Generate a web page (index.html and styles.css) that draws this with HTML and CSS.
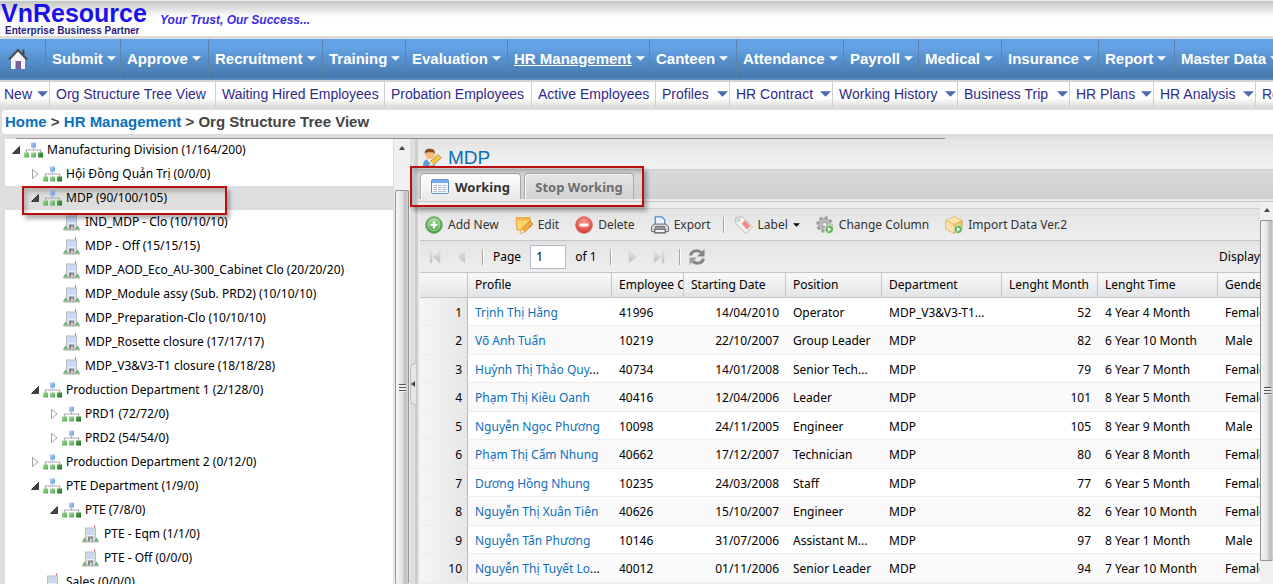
FILE: index.html
```html
<!DOCTYPE html>
<html lang="en">
<head>
<meta charset="utf-8">
<title>VnResource - Org Structure Tree View</title>
<link rel="stylesheet" href="styles.css">
</head>
<body>
<svg class="defs" aria-hidden="true">
  <defs>
    <linearGradient id="gBlue" x1="0" y1="0" x2="1" y2="1"><stop offset="0" stop-color="#b4d2fa"/><stop offset="1" stop-color="#6a9ae4"/></linearGradient>
    <linearGradient id="gLight" x1="0" y1="0" x2="1" y2="1"><stop offset="0" stop-color="#a4dca0"/><stop offset="1" stop-color="#55a550"/></linearGradient>
    <linearGradient id="gDark" x1="0" y1="0" x2="1" y2="1"><stop offset="0" stop-color="#5cae58"/><stop offset="1" stop-color="#1c6e1c"/></linearGradient>
    <linearGradient id="gGrey" x1="0" y1="0" x2="0" y2="1"><stop offset="0" stop-color="#e8e8e8"/><stop offset="1" stop-color="#9a9a9a"/></linearGradient>
    <radialGradient id="gAdd" cx=".5" cy=".3" r=".7"><stop offset="0" stop-color="#a5dc96"/><stop offset="1" stop-color="#3f9638"/></radialGradient>
    <radialGradient id="gDel" cx=".5" cy=".3" r=".7"><stop offset="0" stop-color="#f79a90"/><stop offset="1" stop-color="#d93a30"/></radialGradient>
  </defs>
  <symbol id="org" viewBox="0 0 19 17">
    <path d="M9.500 6v3M2.500 11.500V8.500h14v3" fill="none" stroke="#a9a9b0" stroke-width="1.200"/>
    <rect x="7" y="1" width="5" height="5" fill="url(#gBlue)"/>
    <rect x="0" y="11" width="5" height="5" fill="url(#gLight)"/>
    <rect x="7" y="11" width="5" height="5" fill="url(#gLight)"/>
    <rect x="14" y="11" width="5" height="5" fill="url(#gDark)"/>
  </symbol>
  <symbol id="bld" viewBox="0 0 19 17">
    <path d="M13.500 0v2" stroke="#d33"/>
    <path d="M4 2h11v14H4z" fill="#b9bbbf"/>
    <path d="M5 3h9v12H5z" fill="#dcdde0"/>
    <path d="M6 4h7v7H6z" fill="#eaf2ff"/>
    <path d="M6 4.500h7M6 6.500h7M6 8.500h7" stroke="#a3c0f2"/>
    <path d="M7 11h5v5H7z" fill="#85878b"/><path d="M9 13h2v3H9z" fill="#d4d5d8"/>
    <path d="M1 16l2.500-4 2.500 4zM13 16l2.500-4 2.500 4z" fill="#69b069"/>
    <path d="M1 16.500h17" stroke="#a5b0a5"/>
  </symbol>
  <symbol id="open" viewBox="0 0 8 8"><path d="M7.500 .5v7h-7z" fill="#454545" stroke="#222" stroke-width=".8"/></symbol>
  <symbol id="shut" viewBox="0 0 8 10"><path d="M1.500 .5v9l5.500-4.500z" fill="#fff" stroke="#a2a2a2"/></symbol>
  <symbol id="down" viewBox="0 0 12 6"><path d="M0 0h12L6 6z" fill="currentColor"/></symbol>
</svg>

<header class="brand">
  <div class="logo"><strong class="logo-name">VnResource</strong><span class="logo-sub">Enterprise Business Partner</span></div>
  <em class="slogan">Your Trust, Our Success...</em>
</header>

<nav class="mainnav">
  <a href="#" aria-label="Home page"><svg class="i-home" viewBox="0 0 20 21"><path d="M3 10l7-7 7 7v11H3z" fill="#f4f4f6"/><path d="M1 11.500l9-9.500 9 9.500" fill="none" stroke="#4b4d52" stroke-width="2.200"/><path d="M15.500 7V1.500" stroke="#444" stroke-width="2"/><path d="M7.500 13h5.500v8H7.500z" fill="#7c5ca0"/></svg></a>
  <a href="#">Submit<svg><use href="#down"/></svg></a>
  <a href="#">Approve<svg><use href="#down"/></svg></a>
  <a href="#">Recruitment<svg><use href="#down"/></svg></a>
  <a href="#">Training<svg><use href="#down"/></svg></a>
  <a href="#">Evaluation<svg><use href="#down"/></svg></a>
  <a href="#"><u>HR Management</u><svg><use href="#down"/></svg></a>
  <a href="#">Canteen<svg><use href="#down"/></svg></a>
  <a href="#">Attendance<svg><use href="#down"/></svg></a>
  <a href="#">Payroll<svg><use href="#down"/></svg></a>
  <a href="#">Medical<svg><use href="#down"/></svg></a>
  <a href="#">Insurance<svg><use href="#down"/></svg></a>
  <a href="#">Report<svg><use href="#down"/></svg></a>
  <a href="#">Master Data<svg><use href="#down"/></svg></a>
</nav>

<nav class="subnav">
  <a href="#">New<svg><use href="#down"/></svg></a>
  <a href="#">Org Structure Tree View</a>
  <a href="#">Waiting Hired Employees</a>
  <a href="#">Probation Employees</a>
  <a href="#">Active Employees</a>
  <a href="#">Profiles<svg><use href="#down"/></svg></a>
  <a href="#">HR Contract<svg><use href="#down"/></svg></a>
  <a href="#">Working History<svg><use href="#down"/></svg></a>
  <a href="#">Business Trip<svg><use href="#down"/></svg></a>
  <a href="#">HR Plans<svg><use href="#down"/></svg></a>
  <a href="#">HR Analysis<svg><use href="#down"/></svg></a>
  <a href="#">Report</a>
</nav>

<div class="crumbs"><a href="#">Home</a> &gt; <a href="#">HR Management</a> &gt; <span>Org Structure Tree View</span></div>
<div class="rule"></div>

<div class="work">
  <section class="tree-pane">
    <ul class="tree">
      <li class="l0"><svg class="tw"><use href="#open"/></svg><svg class="ic"><use href="#org"/></svg>Manufacturing Division (1/164/200)</li>
      <li class="l1"><svg class="tw"><use href="#shut"/></svg><svg class="ic"><use href="#org"/></svg>Hội Đồng Quản Trị (0/0/0)</li>
      <li class="l1 sel"><svg class="tw"><use href="#open"/></svg><svg class="ic"><use href="#org"/></svg>MDP (90/100/105)<span class="mark mark-node"></span></li>
      <li class="l2"><span class="tw"></span><svg class="ic"><use href="#bld"/></svg>IND_MDP - Clo (10/10/10)</li>
      <li class="l2"><span class="tw"></span><svg class="ic"><use href="#bld"/></svg>MDP - Off (15/15/15)</li>
      <li class="l2"><span class="tw"></span><svg class="ic"><use href="#bld"/></svg>MDP_AOD_Eco_AU-300_Cabinet Clo (20/20/20)</li>
      <li class="l2"><span class="tw"></span><svg class="ic"><use href="#bld"/></svg>MDP_Module assy (Sub. PRD2) (10/10/10)</li>
      <li class="l2"><span class="tw"></span><svg class="ic"><use href="#bld"/></svg>MDP_Preparation-Clo (10/10/10)</li>
      <li class="l2"><span class="tw"></span><svg class="ic"><use href="#bld"/></svg>MDP_Rosette closure (17/17/17)</li>
      <li class="l2"><span class="tw"></span><svg class="ic"><use href="#bld"/></svg>MDP_V3&amp;V3-T1 closure (18/18/28)</li>
      <li class="l1"><svg class="tw"><use href="#open"/></svg><svg class="ic"><use href="#org"/></svg>Production Department 1 (2/128/0)</li>
      <li class="l2"><svg class="tw"><use href="#shut"/></svg><svg class="ic"><use href="#org"/></svg>PRD1 (72/72/0)</li>
      <li class="l2"><svg class="tw"><use href="#shut"/></svg><svg class="ic"><use href="#org"/></svg>PRD2 (54/54/0)</li>
      <li class="l1"><svg class="tw"><use href="#shut"/></svg><svg class="ic"><use href="#org"/></svg>Production Department 2 (0/12/0)</li>
      <li class="l1"><svg class="tw"><use href="#open"/></svg><svg class="ic"><use href="#org"/></svg>PTE Department (1/9/0)</li>
      <li class="l2"><svg class="tw"><use href="#open"/></svg><svg class="ic"><use href="#org"/></svg>PTE (7/8/0)</li>
      <li class="l3"><span class="tw"></span><svg class="ic"><use href="#bld"/></svg>PTE - Eqm (1/1/0)</li>
      <li class="l3"><span class="tw"></span><svg class="ic"><use href="#bld"/></svg>PTE - Off (0/0/0)</li>
      <li class="l1"><span class="tw"></span><svg class="ic"><use href="#bld"/></svg>Sales (0/0/0)</li>
    </ul>
    <div class="vbar vbar-tree"><svg class="up" viewBox="0 0 6 4"><path d="M3 0l3 4H0z" fill="#444"/></svg><div class="thumb"><i class="grip"></i></div></div>
  </section>

  <div class="splitter"><button type="button" aria-label="Collapse tree"><svg viewBox="0 0 4 6"><path d="M4 0v6L0 3z" fill="#444"/></svg></button></div>

  <section class="detail">
    <h1 class="title"><svg viewBox="0 0 20 20"><path d="M1 18c0-5 2-7 6-7s6 2 6 7z" fill="#5b9de0"/><path d="M5 11l2.500 4L10 11z" fill="#fff"/><circle cx="8" cy="6.500" r="4.800" fill="#f7bd85"/><path d="M3 6C2 2 5 .5 8.500 .8 12 1 13.500 3 12.500 6.500 12 4.500 11 4 9 4.300 6.500 4.500 4 4 3 6z" fill="#8d4d1c"/><path d="M7 18l1.500-4.500 7.500-7 3.300 3.300-7.500 6.700z" fill="#f6c548" stroke="#b5842a" stroke-width=".8"/><path d="M7 18l1.500-4.500L11.800 17z" fill="#fae4b8"/></svg>MDP</h1>
    <div class="tabs">
      <button type="button" class="tab on"><svg viewBox="0 0 18 15"><rect x=".5" y=".5" width="17" height="14" rx="1" fill="#f4f8ff" stroke="#5c8fd6"/><path d="M1 1h16v3H1z" fill="#7aa7e6"/><path d="M2.500 6.500h13M2.500 8.500h13M2.500 10.500h13M2.500 12.500h13" stroke="#b4bccb" stroke-dasharray="3.500 1"/></svg>Working</button>
      <button type="button" class="tab">Stop Working</button>
      <span class="mark mark-tabs"></span>
    </div>
    <div class="tabline"></div>
    <div class="body">
      <div class="grid">
        <div class="tools">
          <button type="button"><svg viewBox="0 0 18 18"><circle cx="9" cy="9" r="8.300" fill="url(#gAdd)" stroke="#599c50" stroke-width=".8"/><circle cx="9" cy="9" r="5.800" fill="none" stroke="#fff" opacity=".5"/><path d="M9 5.500v7M5.500 9h7" stroke="#fff" stroke-width="2.200"/></svg>Add New</button>
          <button type="button"><svg viewBox="0 0 18 18"><path d="M1 1.500h14l1 9-6 3.500H2z" fill="#f9d468" stroke="#dca43c"/><path d="M1 1.500h14v3H1z" fill="#f3b548"/><path d="M5 17.500l1.500-4.500 8.500-8 3 3-8.500 8z" fill="#f8a93a" stroke="#b97a26" stroke-width=".8"/><path d="M5 17.500L6.500 13l3 3z" fill="#fbe6c2"/></svg>Edit</button>
          <button type="button"><svg viewBox="0 0 18 18"><circle cx="9" cy="9" r="8.300" fill="url(#gDel)" stroke="#c9564e" stroke-width=".8"/><path d="M4.500 7.500h9v3h-9z" fill="#fff"/></svg>Delete</button>
          <button type="button"><svg viewBox="0 0 19 19"><path d="M4.500 9V1h7L14.500 4v5" fill="#eaf3ff" stroke="#4f88d0" stroke-width="1.300"/><path d="M3 8.500h13l2.500 3v5h-18v-5z" fill="#d7d8dc" stroke="#66686e"/><path d="M4 11.500h11M4 17.800v-4h11v4z" fill="#f4f4f4" stroke="#55575c" stroke-width="1.200"/></svg>Export</button>
          <i class="sep"></i>
          <button type="button"><svg viewBox="0 0 18 18"><path d="M.8 1.500L7 .8l10.500 10L11 17.500.8 7.500z" fill="#f6f3f3" stroke="#b9b4b4"/><path d="M6.500 7.500L10 4.500l5.500 5.700-3.500 3.500z" fill="#f28c8c"/><circle cx="3.800" cy="4" r="1.300" fill="#fff" stroke="#999" stroke-width=".7"/></svg>Label<svg class="caret"><use href="#down"/></svg></button>
          <button type="button"><svg viewBox="0 0 19 19"><circle cx="9" cy="9" r="7.300" fill="none" stroke="#a0a0a0" stroke-width="3" stroke-dasharray="3.200 2.530"/><circle cx="9" cy="9" r="6.300" fill="#bdbdbd" stroke="#8f8f8f" stroke-width=".8"/><circle cx="9" cy="9" r="2.500" fill="#eee" stroke="#8a8a8a"/><circle cx="14" cy="14" r="4.500" fill="#62b258" stroke="#e6f5e4"/><path d="M12.500 11.500v5l4-2.500z" fill="#fff"/></svg>Change Column</button>
          <button type="button"><svg viewBox="0 0 19 19"><path d="M9.500 .8l8.500 4v9l-8.500 4.500L1 13.800v-9z" fill="#f2c35a" stroke="#d29c35"/><path d="M1 4.800l8.500-4 8.500 4-8.500 4.200z" fill="#fbe6a9"/><path d="M9.500 9v9.300L1 13.800v-9z" fill="#fae2ad"/><path d="M1 4.800L9.500 9 18 4.800M9.500 9v9" fill="none" stroke="#dcab4c" stroke-width=".8"/><circle cx="14" cy="14" r="4.500" fill="#62b258" stroke="#e6f5e4"/><path d="M12.500 11.500v5l4-2.500z" fill="#fff"/></svg>Import Data Ver.2</button>
        </div>
        <div class="pager">
          <button type="button" aria-label="First page"><svg viewBox="0 0 14 14"><path d="M2 1h2v12H2zM12 1v12L5 7z" fill="url(#gGrey)" stroke="#c6c6c6" stroke-width=".6"/></svg></button>
          <button type="button" aria-label="Previous page"><svg viewBox="0 0 14 14"><path d="M10 1v12L3 7z" fill="url(#gGrey)" stroke="#c6c6c6" stroke-width=".6"/></svg></button>
          <i class="sep"></i>
          <label for="page">Page</label><input id="page" type="text" value="1"><span class="of">of 1</span>
          <i class="sep"></i>
          <button type="button" aria-label="Next page"><svg viewBox="0 0 14 14"><path d="M4 1v12l7-6z" fill="url(#gGrey)" stroke="#c6c6c6" stroke-width=".6"/></svg></button>
          <button type="button" aria-label="Last page"><svg viewBox="0 0 14 14"><path d="M12 1h-2v12h2zM2 1v12l7-6z" fill="url(#gGrey)" stroke="#c6c6c6" stroke-width=".6"/></svg></button>
          <i class="sep"></i>
          <button type="button" class="refresh" aria-label="Refresh"><svg viewBox="0 0 18 18"><path d="M2.500 7.500C3 3.500 9 1 13 4.500" fill="none" stroke="#858585" stroke-width="3"/><path d="M16.500 1v7.500H9z" fill="#858585"/><path d="M15.500 10.500C15 14.500 9 17 5 13.500" fill="none" stroke="#858585" stroke-width="3"/><path d="M1.500 17V9.500H9z" fill="#9d9d9d"/></svg></button>
          <span class="display">Display</span>
        </div>
        <table>
          <colgroup><col class="c-num"><col class="c-profile"><col class="c-code"><col class="c-start"><col class="c-pos"><col class="c-dept"><col class="c-pos"><col class="c-dept"><col class="c-gender"></colgroup>
          <thead><tr><th></th><th>Profile</th><th>Employee Code</th><th>Starting Date</th><th>Position</th><th>Department</th><th>Lenght Month</th><th>Lenght Time</th><th>Gender</th></tr></thead>
          <tbody>
            <tr><td>1</td><td><a href="#">Trịnh Thị Hằng</a></td><td>41996</td><td>14/04/2010</td><td>Operator</td><td>MDP_V3&amp;V3-T1...</td><td>52</td><td>4 Year 4 Month</td><td>Female</td></tr>
            <tr><td>2</td><td><a href="#">Võ Anh Tuấn</a></td><td>10219</td><td>22/10/2007</td><td>Group Leader</td><td>MDP</td><td>82</td><td>6 Year 10 Month</td><td>Male</td></tr>
            <tr><td>3</td><td><a href="#">Huỳnh Thị Thảo Quy</a>...</td><td>40734</td><td>14/01/2008</td><td>Senior Tech...</td><td>MDP</td><td>79</td><td>6 Year 7 Month</td><td>Female</td></tr>
            <tr><td>4</td><td><a href="#">Phạm Thị Kiều Oanh</a></td><td>40416</td><td>12/04/2006</td><td>Leader</td><td>MDP</td><td>101</td><td>8 Year 5 Month</td><td>Female</td></tr>
            <tr><td>5</td><td><a href="#">Nguyễn Ngọc Phương</a></td><td>10098</td><td>24/11/2005</td><td>Engineer</td><td>MDP</td><td>105</td><td>8 Year 9 Month</td><td>Male</td></tr>
            <tr><td>6</td><td><a href="#">Phạm Thị Cẩm Nhung</a></td><td>40662</td><td>17/12/2007</td><td>Technician</td><td>MDP</td><td>80</td><td>6 Year 8 Month</td><td>Female</td></tr>
            <tr><td>7</td><td><a href="#">Dương Hồng Nhung</a></td><td>10235</td><td>24/03/2008</td><td>Staff</td><td>MDP</td><td>77</td><td>6 Year 5 Month</td><td>Female</td></tr>
            <tr><td>8</td><td><a href="#">Nguyễn Thị Xuân Tiên</a></td><td>40626</td><td>15/10/2007</td><td>Engineer</td><td>MDP</td><td>82</td><td>6 Year 10 Month</td><td>Female</td></tr>
            <tr><td>9</td><td><a href="#">Nguyễn Tấn Phương</a></td><td>10146</td><td>31/07/2006</td><td>Assistant M...</td><td>MDP</td><td>97</td><td>8 Year 1 Month</td><td>Male</td></tr>
            <tr><td>10</td><td><a href="#">Nguyễn Thị Tuyết Lo</a>...</td><td>40012</td><td>01/11/2006</td><td>Senior Leader</td><td>MDP</td><td>94</td><td>7 Year 10 Month</td><td>Female</td></tr>
          </tbody>
        </table>
        <div class="hbar"></div>
      </div>
      <div class="vbar vbar-grid"><svg class="up" viewBox="0 0 6 4"><path d="M3 0l3 4H0z" fill="#444"/></svg><div class="thumb"><i class="grip"></i></div></div>
    </div>
  </section>
</div>
</body>
</html>
```
FILE: styles.css
```css
* { box-sizing: border-box; }
body {
  margin: 0;
  height: 100vh;
  overflow: hidden;
  display: flex;
  flex-direction: column;
  background: #dedede;
  color: #000;
  font: 12px/16px "Noto Sans", "DejaVu Sans Condensed", sans-serif;
}
a { text-decoration: none; }
button { font: inherit; color: inherit; background: none; border: 0; padding: 0; margin: 0; }
.defs { position: absolute; width: 0; height: 0; }

.brand {
  flex: none;
  display: flex;
  height: 36px;
  border-top: 1px solid #e8efee;
  background: linear-gradient(#c4c4c4, #fff 16px);
  font-family: "Liberation Sans", Arial, sans-serif;
}
.logo { display: flex; flex-direction: column; width: 160px; padding-left: 1px; }
.logo-name { font-size: 25px; line-height: 25px; color: #1a12e8; }
.logo-sub { padding-left: 4px; font-size: 10px; line-height: 10px; font-weight: bold; color: #2b1a80; white-space: nowrap; }
.slogan { padding-top: 11px; font-size: 12px; font-weight: bold; color: #3a2ae8; }

.mainnav {
  flex: none;
  display: grid;
  grid-template-columns: 45px 75px 88px 114px 83px 102px 142px 87px 107px 75px 83px 97px 76px 110px;
  height: 46px;
  border-top: 3px solid #dcdcdc;
  border-bottom: 2px solid #d4d4d4;
  background: linear-gradient(#64a5e8, #62a1e3 9px, #4678ad 38px, #5f95cc);
  font: bold 15px/18px "Liberation Sans", Arial, sans-serif;
  overflow: hidden;
}
.mainnav a { display: flex; align-items: center; gap: 4px; padding: 0 0 2px 6px; border-left: 1px solid #5b83aa; color: #fff; white-space: nowrap; }
.mainnav a:first-child { border-left: 0; padding-left: 8px; }
.mainnav svg { flex: none; width: 9px; height: 5px; color: #fff; }
.mainnav .i-home { width: 20px; height: 21px; }

.subnav {
  flex: none;
  display: grid;
  grid-template-columns: 49px 166px 169px 147px 124px 74px 103px 125px 112px 84px 102px 100px;
  height: 28px;
  border-bottom: 3px solid #dcdcdc;
  background: linear-gradient(#fff 16px, #f0f0ec 20px, #dcdcd8);
  font: 14px/24px "Liberation Sans", Arial, sans-serif;
  overflow: hidden;
}
.subnav a { display: flex; align-items: center; justify-content: space-between; padding: 0 1px 2px 6px; border-left: 1px solid #cfcfcf; color: #2f2a8c; white-space: nowrap; }
.subnav a:first-child { border-left: 0; padding-left: 4px; }
.subnav svg { flex: none; width: 11px; height: 6px; color: #4b69ac; }

.crumbs {
  flex: none;
  height: 24px;
  margin-left: 2px;
  padding-left: 3px;
  background: #fff;
  border-radius: 4px 0 0 4px;
  color: #444;
  font: bold 15px/24px "Liberation Sans", Arial, sans-serif;
}
.crumbs a { color: #0a6fbd; }
.rule { flex: none; width: 73%; height: 5px; margin-left: 16px; border-bottom: 1px solid #8e8e8e; }

.work { flex: 1; min-height: 0; display: flex; }
.tree-pane { flex: none; display: flex; width: 405px; margin-left: 5px; background: #fff; }
.tree { flex: 1; list-style: none; margin: -1px 0 0; padding: 0; }
.tree li { position: relative; display: flex; align-items: center; height: 24px; white-space: nowrap; }
.tree .l0 { padding-left: 7px; }
.tree .l1 { padding-left: 26px; }
.tree .l2 { padding-left: 45px; }
.tree .l3 { padding-left: 64px; }
.tree .sel { background: #dedede; }
.tree .tw { flex: none; width: 8px; height: 10px; margin-right: 4px; }
.tree .ic { flex: none; width: 19px; height: 18px; margin-right: 4px; }

.mark { position: absolute; border: 2px solid #b90f0f; box-shadow: 3px 4px 4px rgba(0, 0, 0, .3), inset 3px 4px 4px rgba(0, 0, 0, .2); pointer-events: none; }
.mark-node { left: 17px; top: 0; width: 205px; height: 29px; z-index: 1; }
.mark-tabs { left: -8px; top: -4px; width: 234px; height: 41px; z-index: 1; }

.vbar { flex: none; display: flex; flex-direction: column; align-items: center; background: #f0f0f0; }
.vbar .up { flex: none; width: 6px; height: 4px; }
.vbar .thumb { display: flex; align-items: center; justify-content: center; width: 100%; border: 1px solid #929292; border-radius: 2px; background: linear-gradient(90deg, #f6f6f6, #e6e6e6 45%, #bdbdbd 80%, #d6d6d6); }
.grip { width: 7px; height: 8px; background: repeating-linear-gradient(#555 0 1px, #eee 1px 3px); }
.vbar-tree { width: 17px; padding: 7px 1px 0; border-left: 1px solid #ddd; }
.vbar-tree .thumb { flex: 1; margin-top: 40px; border-bottom: 0; }
.vbar-grid { width: 13px; padding-top: 6px; }
.vbar-grid .thumb { height: 341px; margin-top: 8px; border-right: 0; }

.splitter { flex: none; display: flex; align-items: center; width: 8px; padding-top: 44px; background: linear-gradient(90deg, #dedede 5px, #cdcdcd 5px); }
.splitter button { display: flex; align-items: center; width: 6px; height: 42px; border: 1px solid #bbb; border-right: 0; border-radius: 5px 0 0 5px; background: #e6e6e6; }
.splitter svg { width: 4px; height: 6px; }

.detail { flex: 1; min-width: 0; display: flex; flex-direction: column; background: #ececec; }
.title { flex: none; display: flex; align-items: center; gap: 6px; height: 30px; margin: 0; padding: 7px 0 0 4px; background: linear-gradient(#e4e4e4, #f2f2f2); color: #0a6fbd; font: 19px/24px "Liberation Sans", Arial, sans-serif; }
.title svg { width: 20px; height: 20px; }
.tabs { flex: none; position: relative; display: flex; gap: 3px; height: 30px; padding: 3px 0 0 2px; border-top: 1px solid #cfcfcf; background: linear-gradient(#dadada, #cfcfcf); font-weight: bold; }
.tab { display: flex; align-items: center; justify-content: center; gap: 6px; width: 101px; border: 1px solid #a8a8a8; border-bottom: 0; border-radius: 4px 4px 0 0; background: linear-gradient(#e6e6e6, #d2d2d2); box-shadow: inset 1px 1px #fff; color: #6e6e6e; font-size: 13px; }
.tab + .tab { width: 110px; }
.tab.on { background: linear-gradient(#fff, #e8e8e8); color: #333; }
.tab svg { width: 18px; height: 15px; }
.tabline { flex: none; height: 3px; border-bottom: 1px solid #c8c8c8; }

.body { flex: 1; min-height: 0; display: flex; }
.grid { flex: 1; min-width: 0; overflow: hidden; display: flex; flex-direction: column; padding: 6px 0 0 2px; }
.tools, .pager { flex: none; display: flex; align-items: center; height: 32px; border-top: 1px solid #cfcfcf; background: linear-gradient(#e4e4e4, #eee); white-space: nowrap; }
.tools { gap: 16px; padding-left: 5px; color: #333; }
.tools button { display: flex; align-items: center; gap: 5px; }
.tools svg { width: 18px; height: 18px; }
.tools .caret { width: 7px; height: 4px; color: #000; }
.sep { flex: none; width: 2px; height: 16px; border-left: 1px solid #a5a5a0; border-right: 1px solid #fff; }
.tools .sep { margin: 0 -6px 0 -4px; }
.pager { border-top-color: #c4c4c4; padding-left: 8px; gap: 13px; }
.pager button { display: flex; opacity: .6; }
.pager svg { width: 14px; height: 14px; }
.pager .refresh { opacity: 1; margin-left: -6px; }
.pager .refresh svg { width: 18px; height: 18px; }
.pager label, .pager input, .of { margin-left: -4px; }
.pager input { width: 36px; height: 24px; padding: 0 5px; border: 1px solid #b5b8c8; background: #fff; font: inherit; }
.display { margin-left: auto; }

table { flex: none; table-layout: fixed; width: 897px; border-collapse: separate; border-spacing: 0; background: #fff; white-space: nowrap; }
.c-num { width: 48px; }
.c-profile { width: 144px; }
.c-code { width: 72px; }
.c-start { width: 102px; }
.c-pos { width: 96px; }
.c-dept { width: 120px; }
.c-gender { width: 103px; }
th { height: 26px; padding: 0 0 0 7px; border: 0 solid #c5c5c5; border-width: 1px 1px 1px 0; background: linear-gradient(#f9f9f9, #e3e4e6); font-weight: normal; text-align: left; overflow: hidden; }
td { height: 28px; padding: 2px 7px 0; border-bottom: 1px solid #ededed; overflow: hidden; }
tr:nth-child(even) td { height: 29px; background: #fafafa; }
tbody tr td:first-child { padding-right: 5px; text-align: right; border-right: 1px solid #b8b8b8; background: linear-gradient(90deg, #f6f6f6, #e6e6e6); }
td:nth-child(4), td:nth-child(7) { text-align: right; }
td a { color: #0a6fbd; }
.hbar { flex: none; height: 14px; margin: 1px 242px 0 18px; border: 1px solid #929292; background: #ddd; }
```
